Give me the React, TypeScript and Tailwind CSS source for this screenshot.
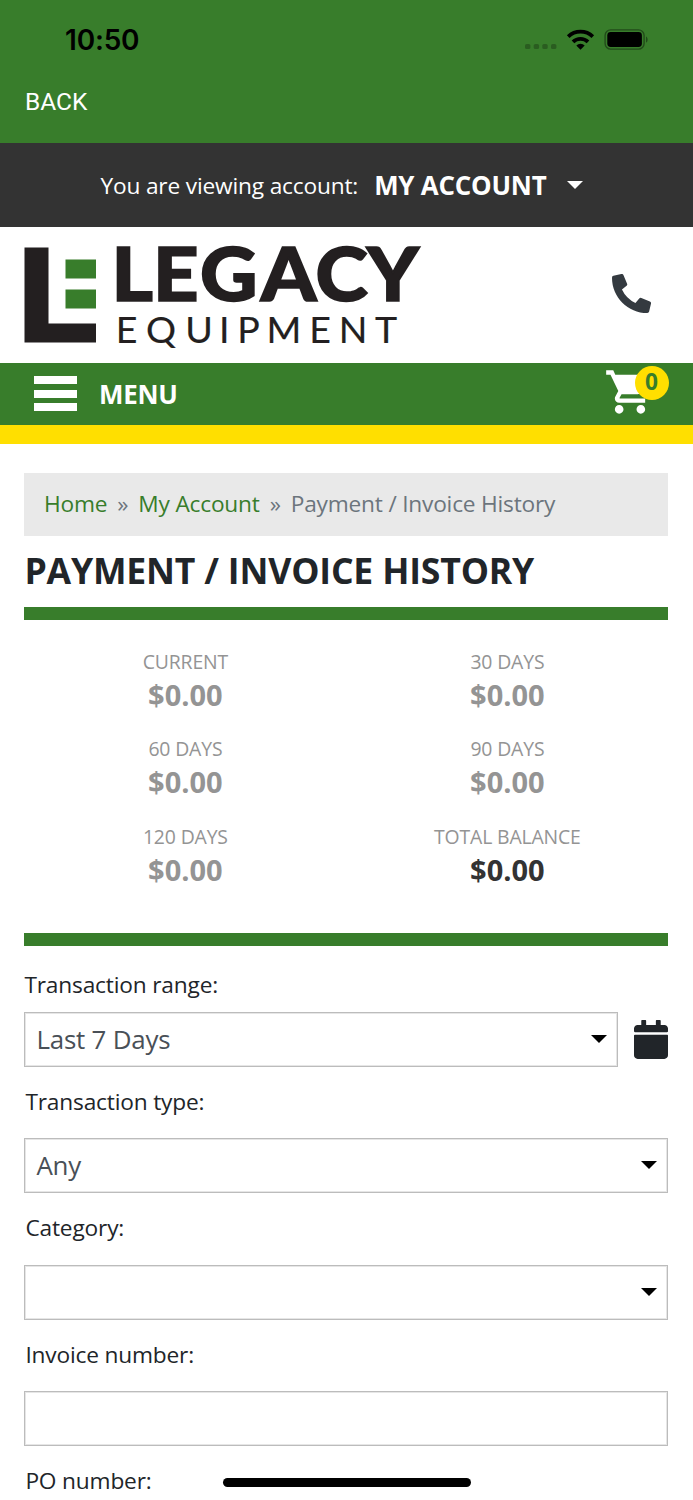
import React from 'react';
import { FaPhoneAlt, FaCalendar } from 'react-icons/fa';
import { MdShoppingCart } from 'react-icons/md';

interface Balance {
  label: string;
  value: string;
  total?: boolean;
}

const balances: Balance[] = [
  { label: 'Current', value: '$0.00' },
  { label: '30 Days', value: '$0.00' },
  { label: '60 Days', value: '$0.00' },
  { label: '90 Days', value: '$0.00' },
  { label: '120 Days', value: '$0.00' },
  { label: 'Total Balance', value: '$0.00', total: true },
];

const Caret: React.FC<{ className?: string }> = ({ className = '' }) => (
  <svg viewBox="0 0 16 8" className={`h-2 w-4 shrink-0 ${className}`} fill="currentColor">
    <path d="M0 0h16L8 8z" />
  </svg>
);

const StatusBar = () => (
  <div className="flex h-20 items-center justify-between pr-11 pl-[65px] text-black">
    <span className="font-[Inter] text-[28px] leading-none font-semibold tracking-[-0.2px]">10:50</span>
    <svg width="126" height="24" viewBox="0 0 126 24">
      <g fillOpacity="0.25">
        <rect x="2" y="16" width="5.4" height="5" rx="1.6" />
        <rect x="10.7" y="16" width="5.4" height="5" rx="1.6" />
        <rect x="19.3" y="16" width="5.4" height="5" rx="1.6" />
        <rect x="28" y="16" width="5.4" height="5" rx="1.6" />
      </g>
      <g fill="none" stroke="currentColor" strokeWidth="3.8">
        <path d="M45.2 8.6a17.8 17.8 0 0 1 24.6 0" />
        <path d="M50 13.9a10.8 10.8 0 0 1 15 0" />
      </g>
      <path d="M57.5 21.7l-4.2-4.2a5.9 5.9 0 0 1 8.4 0z" />
      <rect x="82.1" y="1.9" width="39" height="19.2" rx="5.6" fill="none" stroke="currentColor" strokeOpacity="0.4" strokeWidth="1.4" />
      <rect x="84.3" y="4.1" width="34.6" height="14.8" rx="3.4" />
      <path d="M123 8.4c2.2 1 2.2 5.2 0 6.2z" fillOpacity="0.4" />
    </svg>
  </div>
);

const Logo = () => (
  <svg width="396" height="100" viewBox="0 0 396 100" className="overflow-visible">
    <path d="M0.5 2.5h24v76h47.5v19H0.5z" fill="#231f20" />
    <path d="M41.5 14.5H72v19H41.5zM41.5 44.5H72v19H41.5z" fill="#387d2b" />
    <g fill="#231f20" stroke="#231f20" fontFamily="Lato, sans-serif">
      <text x="81 119.4 163 219.2 269.9 317.3" y="56.3" fontSize="73.5" fontWeight="900" strokeWidth="1.6" transform="scale(1.08 1)">
        LEGACY
      </text>
      <text x="91.8 122 161.2 195 213.2 242.5 285.2 314.8 351" y="98" fontSize="37.5" strokeWidth="0.2">
        EQUIPMENT
      </text>
    </g>
  </svg>
);

interface FieldProps {
  label: string;
  value?: string;
  select?: boolean;
}

const FieldBox: React.FC<{ value?: string; select?: boolean }> = ({ value, select }) => (
  <div className="flex h-[55px] flex-1 items-center justify-between border border-[#bcbcbc] pr-2.5 pl-[11px] text-[25.9px] tracking-[-0.2px] text-[#495057] shadow-[inset_0_0_0_1px_#e6e6e6]">
    <span>{value}</span>
    {select && <Caret className="-mt-px text-black" />}
  </div>
);

const Field: React.FC<FieldProps> = ({ label, value, select }) => (
  <div className="flex h-[126.3px] flex-col">
    <div className="flex h-[71.3px] items-center pb-px pl-px text-[22.7px] tracking-[-0.17px]">{label}</div>
    <FieldBox value={value} select={select} />
  </div>
);

export default function App() {
  return (
    <div className="relative h-[1500px] w-[693px] overflow-hidden bg-white font-['Open_Sans',sans-serif] text-[#212529]">
      <header>
        <div className="h-[143px] bg-[#387d2b]">
          <StatusBar />
          <div className="pl-[25px] font-[Roboto] text-[24.5px] leading-[44px] text-white">BACK</div>
        </div>

        <div className="flex h-21 items-center justify-center bg-[#333] pr-2.5 text-white">
          <span className="pt-0.5 text-[22.7px] tracking-[-0.17px]">You are viewing account:</span>
          <span className="ml-4 text-[25.9px] font-bold tracking-[-0.2px]">MY ACCOUNT</span>
          <Caret className="ml-5" />
        </div>

        <div className="flex h-34 items-center justify-between pr-[42px] pl-6">
          <Logo />
          <FaPhoneAlt className="mb-1 h-[39px] w-[39px] text-[#343a40]" />
        </div>

        <div className="flex h-[81px] items-center justify-between border-b-[19px] border-[#ffdf00] bg-[#387d2b] pr-[37px] pl-[34px]">
          <div className="flex items-center">
            <div className="flex flex-col gap-[5.5px]">
              <span className="h-2 w-[42.5px] bg-white" />
              <span className="h-2 w-[42.5px] bg-white" />
              <span className="h-2 w-[42.5px] bg-white" />
            </div>
            <span className="ml-[22.5px] text-[25.9px] font-bold tracking-[-0.2px] text-white">MENU</span>
          </div>
          <div className="relative mb-1">
            <MdShoppingCart className="h-[52px] w-[52px] text-white" />
            <span className="absolute top-0 left-[30.5px] flex h-[34px] w-[34px] items-center justify-center rounded-full bg-[#ffdf00] pb-px text-[22.7px] leading-none font-bold text-[#387d2b]">
              0
            </span>
          </div>
        </div>
      </header>

      <main className="pt-[29px] pr-[24.6px] pl-[24.4px]">
        <nav className="flex h-[63px] items-center gap-2.5 bg-[#e9e9e9] px-[19.6px] text-[22.7px] tracking-[-0.2px] text-[#6c757d]">
          <a href="#" className="text-[#387d2b]">Home</a>
          <span>»</span>
          <a href="#" className="text-[#387d2b]">My Account</a>
          <span>»</span>
          <span>Payment / Invoice History</span>
        </nav>

        <h1 className="flex h-[71px] items-center pb-0.5 text-[35.6px] font-bold tracking-[-0.18px] uppercase">
          Payment / Invoice History
        </h1>

        <section className="h-[339px] border-y-[13px] border-[#387d2b] pt-[25px]">
          <div className="grid grid-cols-2 text-center">
            {balances.map((item) => (
              <div key={item.label} className="h-[87.4px] text-[#949494]">
                <div className="text-[19.4px] leading-[33px] tracking-[-0.15px] uppercase">{item.label}</div>
                <div className={`text-[29px] leading-[34px] font-bold ${item.total ? 'text-[#333]' : ''}`}>{item.value}</div>
              </div>
            ))}
          </div>
        </section>

        <div className="pt-[21px] text-[22.7px] leading-9 tracking-[-0.17px]">Transaction range:</div>
        <div className="mt-[9px] flex items-center gap-4">
          <FieldBox value="Last 7 Days" select />
          <FaCalendar className="h-[39px] w-[34px]" />
        </div>
        <Field label="Transaction type:" value="Any" select />
        <Field label="Category:" select />
        <Field label="Invoice number:" />
        <Field label="PO number:" />
      </main>

      {/* home indicator */}
      <div className="absolute bottom-[13px] left-[223px] h-[9px] w-[248px] rounded-full bg-black" />
    </div>
  );
}
